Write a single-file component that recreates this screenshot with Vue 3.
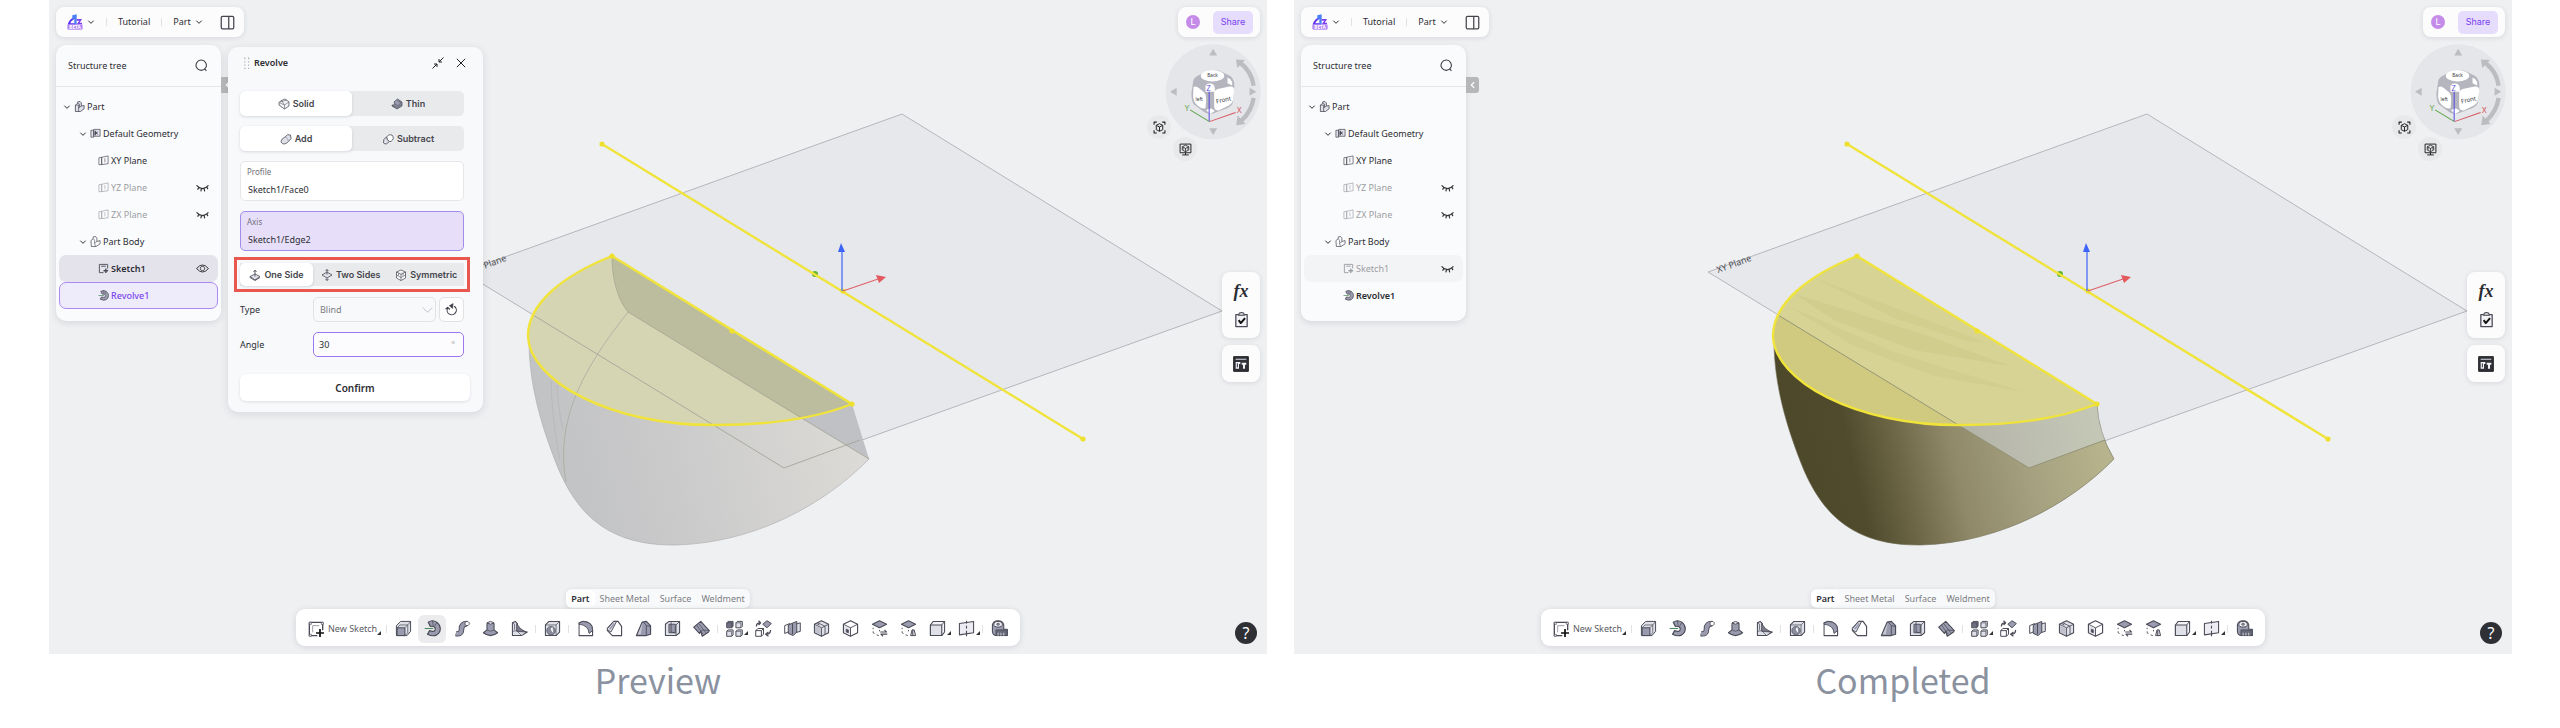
<template>
  <main class="compare">
    <figure v-for="view in views" :key="view.id" class="figure">
      <div class="screen">
        <svg class="scene" viewBox="0 0 1218 654" aria-hidden="true">
          <defs>
            <linearGradient :id="view.id + '-body'" gradientUnits="userSpaceOnUse" x1="490" y1="440" x2="790" y2="370">
              <stop v-for="stop in view.bodyStops" :key="stop[0]" :offset="stop[0]" :stop-color="stop[1]" />
            </linearGradient>
          </defs>
          <path d="M853 114L1173 311L735 468L414 272Z" fill="#e6e8ec" stroke="#b4b6bb" />
          <text class="plane-name" transform="translate(424 273) rotate(-20)">XY Plane</text>
          <path :d="bodyPath" :fill="`url(#${view.id}-body)`" :stroke="view.edge" stroke-width="0.6" />

          <template v-if="view.id === 'preview'">
            <path d="M803 404L820 459L753 419Z" fill="#bfc1c5" />
            <path :d="facePath" fill="#d6d5b3" />
            <path d="M563 256C563 280 569 300 579 312L753 419L803 404Z" fill="#bcbd9f" />
            <path d="M563 256C563 280 569 300 579 312L820 459" fill="none" stroke="#a6a795" stroke-width="0.8" />
            <path d="M579 312C540 362 505 415 517 482" fill="none" stroke="#a9a9a0" stroke-width="0.8" />
            <path d="M502 381C503 410 506 436 511 460M508 385C509 402 511 418 514 430" fill="none" stroke="#b5b6b8" stroke-width="0.8" />
            <path d="M484 315L735 468L811 440" fill="none" stroke="#a4a59a" stroke-width="0.9" />
          </template>
          <template v-else>
            <path d="M666 426L735 468L811 440Q804 424 803 404Q750 425 666 426Z" fill="#d2dadf" fill-opacity="0.5" />
            <path :d="facePath" fill="#cfca80" />
            <path d="M563 256L803 404Q750 425 666 426L484 315Q500 280 563 256Z" fill="#d6d395" />
            <path d="M520 278L612 312L690 342L672 341L600 318Z" fill="#cfcc8c" fill-opacity="0.7" />
            <path d="M500 294L540 306L640 338L716 366L620 350L540 320Z" fill="#cdca88" fill-opacity="0.6" />
            <path d="M494 306L600 352L730 392L640 376L560 346Z" fill="#cfcc8c" fill-opacity="0.6" />
            <path d="M484 315L735 468L811 440" fill="none" stroke="#8e8f73" stroke-width="0.9" />
          </template>

          <path :d="facePath" class="sketch-line" />
          <circle cx="766" cy="274" r="3" fill="#62b52e" />
          <path d="M553 144L1034 439" class="sketch-line" />
          <circle v-for="p in points" :key="p[0]" :cx="p[0]" :cy="p[1]" r="2.6" fill="#efe02f" />
          <path d="M793 291V250" stroke="#4a6df5" stroke-width="1.3" />
          <path d="M792 243L796 252H789Z" fill="#3d63f7" />
          <path d="M794 291L829 279" stroke="#e0626a" stroke-width="1.3" />
          <path d="M837 277L827 275L830 283Z" fill="#e2595e" />
        </svg>

        <header class="top">
          <nav class="bar menu">
            <button class="logo" aria-label="Home">
              <svg viewBox="0 0 48 48" width="16" height="16">
                <path d="M2 32C4 22 12 12 24 8V14C15 17 10 24 10 28H24V32Z" fill="#5a2cf0" />
                <path d="M16 4L29 1V32H22V12L16 20Z" fill="#4a7ff7" />
                <path d="M29 15H45L38 26H45V31H29L37 20H29Z" fill="#7b3df2" />
                <rect x="1" y="31" width="46" height="16" rx="4" fill="#b388f7" />
                <text x="24" y="44" text-anchor="middle" class="beta">BETA</text>
              </svg>
              <Icon name="chevron" :size="8" />
            </button>
            <i class="rule"></i>
            <a href="#" class="crumb">Tutorial</a>
            <i class="rule"></i>
            <button class="crumb">Part <Icon name="chevron" :size="8" /></button>
            <button class="panel-toggle" aria-label="Toggle panel"><Icon name="columns" :size="15" /></button>
          </nav>
          <div class="bar account">
            <span class="avatar">L</span>
            <button class="share">Share</button>
          </div>
        </header>

        <div class="middle">
          <aside class="tree">
            <div class="tree-head">
              <span>Structure tree</span>
              <button aria-label="Search"><Icon name="search" :size="13" /></button>
            </div>
            <ul>
              <li
                v-for="node in view.nodes"
                :key="node.name"
                :class="['node', 'level-' + node.level, node.state, { dim: node.hidden }]"
              >
                <Icon v-if="node.level < 3" name="chevron" :size="8" class="node-arrow" />
                <Icon :name="node.icon" :size="11" class="node-icon" />
                <span class="node-name">{{ node.name }}</span>
                <Icon v-if="node.hidden" name="closed" :size="13" class="eye" />
                <Icon v-else-if="node.state === 'hover'" name="eye" :size="13" class="eye" />
              </li>
            </ul>
            <button class="fold" aria-label="Collapse tree"><Icon name="back" :size="10" /></button>
          </aside>

          <form v-if="view.dialog" class="dialog" @submit.prevent>
            <div class="dialog-head">
              <Icon name="grip" :size="13" class="grip" />
              <h2>Revolve</h2>
              <button type="button" aria-label="Minimize"><Icon name="shrink" :size="12" /></button>
              <button type="button" aria-label="Close"><Icon name="close" :size="10" /></button>
            </div>
            <div class="fields">
              <div
                v-for="group in groups"
                :key="group.key"
                :class="['segment', group.key]"
              >
                <button
                  v-for="option in group.options"
                  :key="option.label"
                  type="button"
                  :class="{ active: chosen[group.key] === option.label }"
                  @click="chosen[group.key] = option.label"
                >
                  <Icon :name="option.icon" :size="12" />{{ option.label }}
                </button>
              </div>
              <label class="pick profile"><span>Profile</span><input v-model="profile" readonly /></label>
              <label class="pick axis"><span>Axis</span><input v-model="axis" readonly /></label>
              <div class="line type">
                <label for="revolve-type">Type</label>
                <div class="select">
                  <select id="revolve-type" disabled><option>Blind</option></select>
                  <Icon name="thinChevron" :size="11" class="select-arrow" />
                </div>
                <button type="button" class="flip" aria-label="Flip direction"><Icon name="rotate" :size="13" /></button>
              </div>
              <div class="line angle">
                <label for="revolve-angle">Angle</label>
                <div class="number">
                  <input id="revolve-angle" v-model="angle" />
                  <span>°</span>
                </div>
              </div>
            </div>
            <button class="confirm">Confirm</button>
          </form>

          <div class="gizmo">
            <svg viewBox="105 130 290 290" width="97" height="97" aria-hidden="true">
              <circle cx="249" cy="276" r="142" fill="#e5e6e9" />
              <path d="M249 147L261 167H237ZM249 405L261 385H237ZM120 276L140 264V288ZM378 276L358 264V288Z" fill="#bcbdc0" />
              <path d="M331 190Q364 216 370 258M370 294Q364 334 333 363" fill="none" stroke="#bcbdc0" stroke-width="13" />
              <path d="M317 179L344 181L321 205ZM318 376L346 372L322 347Z" fill="#bcbdc0" />
              <path d="M190 240Q194 231 210 224Q240 205 268 213L300 229Q314 240 312 262L308 307Q305 318 292 324L250 340Q236 345 222 336L192 314Q184 306 184 280Z" fill="#b4b5be" />
              <ellipse cx="247" cy="228" rx="35" ry="17" fill="#fff" />
              <path d="M190 262Q197 256 208 266L223 279Q229 286 228 304L226 325Q217 329 204 318Q190 309 189 290ZM252 278Q254 270 266 267L298 260Q312 258 312 272L308 302Q306 312 296 317L267 331Q253 334 252 320ZM232 252Q253 247 254 266V276H226V258ZM292 233Q302 236 306 247V257L292 250ZM228 331Q240 320 254 333L240 342Z" fill="#fff" />
              <text x="247" y="233" class="face">Back</text>
              <text x="207" y="302" class="face">left</text>
              <text x="280" y="306" class="face front" transform="rotate(-12 280 300)">Front</text>
              <path d="M238 365L180 330" stroke="#5aa345" stroke-width="3" />
              <path d="M238 365L316 338" stroke="#d8545f" stroke-width="3" />
              <path d="M237 363V276" stroke="#5548e0" stroke-width="3" />
              <text x="171" y="333" class="letter y">Y</text>
              <text x="327" y="340" class="letter x">X</text>
              <text x="235" y="275" class="letter z">Z</text>
            </svg>
            <button class="orb fit" aria-label="Fit view"><Icon name="fit" :size="13" /></button>
            <button class="orb display" aria-label="Display style"><Icon name="monitor" :size="13" /></button>
          </div>
        </div>

        <div class="side-tools">
          <div class="bar side-group">
            <button class="fx" aria-label="Variables"><i>fx</i></button>
            <button aria-label="Check"><Icon name="clipboard" :size="17" /></button>
          </div>
          <div class="bar side-group">
            <button aria-label="Library"><Icon name="library" :size="16" /></button>
          </div>
        </div>

        <footer class="bottom">
          <div class="dock">
            <div class="tabs">
              <button v-for="tab in tabs" :key="tab" :class="{ active: tab === 'Part' }">{{ tab }}</button>
            </div>
            <div class="toolbar">
              <button class="new-sketch more"><Icon name="newSketch" :size="16" />New Sketch</button>
              <template v-for="(group, g) in tools" :key="g">
                <i class="rule"></i>
                <button
                  v-for="tool in group"
                  :key="tool"
                  :aria-label="tool"
                  :class="['tool', { active: view.dialog && tool === 'revolve', more: withMenu.includes(tool) }]"
                >
                  <Icon :name="tool" :size="17" />
                </button>
              </template>
            </div>
          </div>
          <button class="help" aria-label="Help">?</button>
        </footer>
      </div>
      <figcaption>{{ view.caption }}</figcaption>
    </figure>
  </main>
</template>

<script setup>
import { h, reactive, ref } from 'vue'

const ink = '#4a4b57'
const mid = '#9a9baf'
const pale = '#dfe0e8'

// each shape: [path, fill, stroke, stroke width] on a 24 x 24 grid
const icons = {
  chevron: [['M4 8L12 16L20 8', 'none', 'currentColor', 3]],
  thinChevron: [['M2 8L12 18L22 8', 'none', 'currentColor', 2]],
  back: [['M15 5L8 12L15 19', 'none', '#fff', 3]],
  columns: [['M4 2H20Q22 2 22 4V20Q22 22 20 22H4Q2 22 2 20V4Q2 2 4 2ZM14 2V22', 'none', '#45464d', 2]],
  search: [['M21 22L18 18M11.500 2A9.500 9.500 0 1 1 11.400 2Z', 'none', '#3c3d44', 2]],
  close: [['M2 2L22 22M22 2L2 22', 'none', '#222', 2.4]],
  shrink: [['M23 1L14 10M14 4V10H20M1 23L10 14M4 14H10V20', 'none', '#222', 2]],
  grip: [['M8 1H10V4H8ZM8 8H10V10H8ZM8 14H10V16H8ZM8 20H10V22H8ZM15 1H17V4H15ZM15 8H17V10H15ZM15 14H17V16H15ZM15 20H17V22H15Z', '#aaabb0', 'none', 0]],
  rotate: [['M5 9A8.500 8.500 0 1 0 17 6', 'none', '#3b3c44', 2], ['M15 1L8 5L14 10Z', '#3b3c44', '#3b3c44', 1], ['M1 11L5 8L9 12', 'none', '#3b3c44', 2]],
  eye: [['M1 12Q12 -1 23 12Q12 25 1 12Z', 'none', '#333', 1.8], ['M12 8A4 4 0 1 1 11.900 8Z', 'none', '#333', 1.8]],
  closed: [['M1 8Q12 20 23 8M5 12L3 16M10 14L9 19M15 14L16 19M20 11L22 15', 'none', '#333', 2.2]],
  part: [['M3 9L8 5V2L13 1L16 4V11L22 10V17L14 23H3Z', pale, ink, 1.800], ['M3 9H10V23M10 15L16 11M8 5L12 7V14', 'none', ink, 1.5]],
  geometry: [['M2 5H8V20H2ZM8 3H22V18H8Z', pale, ink, 1.600], ['M12 6V16M9 11H17M10 8L16 14M16 8L10 14', 'none', ink, 2]],
  plane: [['M2 6L8 5V21H2ZM8 5L22 2V19L8 21Z', 'none', ink, 1.500], ['M15 7V16', 'none', ink, 1.300]],
  body: [['M2 10L7 6V2L12 1L15 5V12L22 10V17L13 23H3Z', 'none', ink, 1.600], ['M7 6L10 9V16L15 12M10 16L12 23', 'none', ink, 1.300]],
  sketch: [['M3 21V3H21V12', 'none', ink, 2], ['M3 21H12M7 7H17', 'none', ink, 2], ['M17 12V22M12 17H22', 'none', ink, 3]],
  newSketch: [['M2 2H22V14M2 2V22H14', 'none', ink, 2], ['M7 17V7H17', 'none', '#a0a1aa', 1.500], ['M2 2H5V5H2ZM20 2H23V5H20ZM2 20H5V23H2Z', '#fff', ink, 1], ['M18 12V24M12 18H24', 'none', '#111', 2.6]],
  solid: [['M5 6L14 2L22 8V16L13 22L2 14V9Z', '#f1f2f5', ink, 1.500], ['M2 9L13 14L22 8M13 14V22M7 5L13 14M4 8L18 4', 'none', ink, 1]],
  thin: [['M6 8L13 2L22 8V16L12 22L2 16V14L8 14Z', mid, ink, 1.500], ['M2 15L13 19L22 12M8 12L14 16L20 9L13 5', 'none', ink, 1.300]],
  add: [['M10 8Q15 1 21 4Q25 12 17 17L12 21Q4 24 2 17Q3 11 10 8Z', pale, ink, 1.600], ['M10 8Q16 9 17 17', 'none', mid, 1.500]],
  subtract: [['M9 8Q14 1 20 4Q26 11 18 17Q11 18 9 8Z', '#fff', ink, 1.600], ['M9 8Q1 12 3 20Q9 25 14 17Q10 14 9 8Z', pale, ink, 1.600]],
  oneSide: [['M2 15L12 10L22 15L12 22Z', pale, ink, 1.600], ['M12 15V3M9 6L12 2L15 6M2 15V17L12 23L22 17', 'none', ink, 1.700]],
  twoSides: [['M2 12L12 6L22 12L12 18Z', pale, ink, 1.600], ['M12 11V1M9 4L12 1L15 4M12 18V23M9 20L12 23L15 20', 'none', ink, 1.700]],
  symmetric: [['M3 6L12 2L21 6L12 11ZM3 6V18L12 23L21 18V6', '#fff', ink, 1.500], ['M12 11V23M3 12L12 17L21 12M7 9V13M16 9V13', 'none', ink, 1.300]],
  fit: [['M2 7V2H7M17 2H22V7M22 17V22H17M7 22H2V17', 'none', '#222', 2], ['M12 5L18 8V16L12 19L6 16V8ZM6 8L12 11L18 8M12 11V19', 'none', '#222', 1.800]],
  monitor: [['M2 2H22V18H2ZM12 18V22M6 22H18', 'none', '#222', 1.800], ['M12 4L18 7V13L12 16L6 13V7ZM6 7L12 10L18 7M12 10V16M8 10V12M16 10V12', 'none', '#222', 1.500]],
  clipboard: [['M4 5H20V22H4Z', '#f3f3f6', ink, 1.800], ['M8 6Q8 2 12 2T16 6Z', '#ddd', ink, 1.500], ['M8 13L11 17L17 10', 'none', '#111', 2.800]],
  library: [['M1 1H23V23H1Z', '#303139', '#222', 1.500], ['M4 4H20V6H4Z', '#aeb0b8', 'none', 0], ['M4 9H11V12H9V19H4ZM13 10H20V13H18V19H15V13H13Z', '#f3f3f6', 'none', 0], ['M6.500 11V17', 'none', '#303139', 1.500]],
  extrude: [['M2 8L8 2H22V16L17 22H2Z', pale, ink, 1.400], ['M3 11H14V22H3Z', mid, ink, 1.400], ['M14 11L18 7H7L3 11M18 7V18L14 22M22 2L18 7', 'none', ink, 1]],
  revolve: [['M6 3Q12 -1 18 3Q23 7 23 12Q23 18 18 21Q12 24 5 20L8 15Q16 18 16 12Q15 8 9 9Z', mid, ink, 1.600], ['M1 12H13', 'none', '#4c8b63', 1.600], ['M12 1L13 8M18 3L15 9M5 20L8 15', 'none', ink, 1]],
  sweep: [['M4 19Q12 21 12 13T20 5', 'none', ink, 8], ['M4 19Q12 21 12 13T20 5', 'none', mid, 5.500], ['M20 2A3 3 0 1 1 19.900 2Z', '#fff', ink, 1.300]],
  loft: [['M2 18L7 14V5H17V14L22 18Q12 26 2 18Z', mid, ink, 1.500], ['M7 4Q12 0 17 4Q12 8 7 4Z', pale, ink, 1.300], ['M7 14Q12 18 17 14', 'none', ink, 1]],
  rib: [['M2 4L6 2L9 5V14L23 17L15 22H2Z', pale, ink, 1.500], ['M8 5Q12 13 21 17L8 16Z', '#777889', ink, 1.200], ['M2 16L8 15L15 22M2 4L5 6V14', 'none', ink, 1]],
  hole: [['M2 7L7 2H22V17L17 22H2Z', pale, ink, 1.500], ['M17 22V7H2M17 7L22 2', 'none', ink, 1], ['M10 9A6 6 0 1 1 9.900 9Z', '#8a8b9c', ink, 1], ['M12 10Q7 13 13 18', '#fff', 'none', 0]],
  fillet: [['M3 22V4L8 2Q22 3 22 14V22Z', '#fff', ink, 1.600], ['M3 4L9 2Q22 3 22 14V15L17 19Q17 8 3 6Z', mid, ink, 1.300], ['M4 7Q15 8 16 21H4Z', '#fff', 'none', 0]],
  chamfer: [['M11 2H17L22 9V22H9L2 15V12Z', '#fff', ink, 1.600], ['M11 2H15L7 17L2 14V12Z', pale, ink, 1.300], ['M12 5L5 13', 'none', mid, 2.500]],
  draft: [['M10 3L16 2L22 8V20L16 22H2Z', mid, ink, 1.600], ['M12 3L16 8V22M16 8L22 9', 'none', ink, 1.200], ['M11 4L4 20H8Z', '#c9cad5', 'none', 0]],
  shell: [['M2 6L7 2H22V18L17 22H2Z', pale, ink, 1.500], ['M7 6H16V18H7Z', mid, ink, 1.300], ['M10 3V17L16 18M17 22V7L22 2', 'none', ink, 1.200]],
  thicken: [['M1 10L11 2L23 15L22 17L13 23L11 16L9 19Z', mid, ink, 1.500], ['M5 7L14 20M8 5L18 18M9 19L13 14L23 15', 'none', ink, 1]],
  pattern: [['M1 4L3 2H10V9L8 11H1Z', '#6d6e80', ink, 1.300], ['M14 4L16 2H23V9L21 11H14ZM1 16L3 14H10V21L8 23H1ZM14 16L16 14H23V21L21 23H14Z', pale, ink, 1.400], ['M8 11V4H1M21 11V4H14M8 23V16H1M21 23V16H14', 'none', ink, 1]],
  transform: [['M11 6L17 1L23 5L17 11Z', mid, ink, 1.400], ['M1 15L4 12H12V20L9 23H1ZM9 23V15H1M9 15L12 12', '#fff', ink, 1.400], ['M2 9Q2 4 7 4M5 1L8 4L5 7M22 14Q22 20 16 20M19 17L15 20L19 23', 'none', ink, 1.800]],
  split: [['M1 8L8 5V16L1 19Z', '#fff', ink, 1.400], ['M16 6L23 4V16L16 18Z', pale, ink, 1.400], ['M6 7L18 2V17L13 22L6 19Z', mid, ink, 1.400], ['M12 5V20', 'none', ink, 1.400]],
  join: [['M2 6L12 1L22 6V18L12 23L2 18Z', pale, ink, 1.500], ['M2 6L12 11L22 6M12 11V23M7 4L17 9V20M5 5L9 7', 'none', ink, 1.200], ['M3 8L11 12V21L3 17Z', '#c0c1cd', 'none', 0]],
  intersect: [['M2 6L12 1L22 6V18L12 23L2 18Z', '#fff', ink, 1.600], ['M2 6L12 11L22 6M12 11V23', 'none', ink, 1.300], ['M3 8L11 12V21L3 17Z', pale, 'none', 0], ['M6 13L9 14V18L6 17Z', '#50515e', ink, 1]],
  moveFace: [['M2 6L12 1L22 6L12 11Z', mid, ink, 1.500], ['M3 11V13M3 16V18L5 19M8 21L11 22M12 14V16', 'none', ink, 1.300], ['M13 17H22L19 14M23 20H14L17 23', 'none', ink, 1.600]],
  draftFace: [['M2 6L12 1L22 6L12 11Z', mid, ink, 1.500], ['M3 11V13M3 16V18L5 19M8 21L11 22M12 14V16', 'none', ink, 1.300], ['M15 22L17 14H20L22 22ZM18 14V22', pale, ink, 1.400]],
  block: [['M2 7L6 2H22V17L18 22H2Z', '#f3f3f7', ink, 1.500], ['M2 7H18V22H2Z', pale, ink, 1.500], ['M18 7L22 2', 'none', ink, 1.300]],
  datum: [['M2 5L22 2V18L2 21Z', '#ececf2', ink, 1.500], ['M12 1V5M12 8V12M12 15V23', 'none', ink, 1.600]],
  measure: [['M2 7Q3 1 10 1T18 7V13H23V22H8Q2 22 2 16Z', mid, ink, 1.500], ['M10 2Q16 2 16 6T10 10T4 6T10 2Z', '#f0f0f4', ink, 1.400], ['M10 4.500Q12 4.500 12 6T10 7.500T8 6T10 4.500Z', mid, ink, 1], ['M7 14H23V22H7Z', '#666777', ink, 1.200], ['M10 22V18M14 22V18M18 22V18', 'none', '#fff', 1]]
}

const Icon = (props) =>
  h(
    'svg',
    { viewBox: '0 0 24 24', width: props.size, height: props.size, 'aria-hidden': 'true' },
    icons[props.name].map(([d, fill, stroke, width]) =>
      h('path', { d, fill, stroke, 'stroke-width': width, 'stroke-linejoin': 'round' })
    )
  )
Icon.props = ['name', 'size']

const facePath = 'M563 256C515 275 479 303 479 336C480 380 560 426 668 425C720 425 765 419 803 404Z'
const bodyPath =
  'M480 345C481 385 491 422 507 463C528 517 562 546 627 545C705 543 775 505 820 459Q804 432 803 404C700 360 600 300 480 345Z'
const points = [[553, 144], [1034, 439], [563, 256], [803, 404], [683, 331], [794, 291]]

const tree = (last) => [
  { name: 'Part', level: 1, icon: 'part' },
  { name: 'Default Geometry', level: 2, icon: 'geometry' },
  { name: 'XY Plane', level: 3, icon: 'plane' },
  { name: 'YZ Plane', level: 3, icon: 'plane', hidden: true },
  { name: 'ZX Plane', level: 3, icon: 'plane', hidden: true },
  { name: 'Part Body', level: 2, icon: 'body' },
  ...last
]

const views = [
  {
    id: 'preview',
    caption: 'Preview',
    dialog: true,
    edge: '#a9aaac',
    bodyStops: [[0, '#c1c2c4'], [0.35, '#c9c9ca'], [1, '#dbdad6']],
    nodes: tree([
      { name: 'Sketch1', level: 3, icon: 'sketch', state: 'hover' },
      { name: 'Revolve1', level: 3, icon: 'revolve', state: 'editing' }
    ])
  },
  {
    id: 'completed',
    caption: 'Completed',
    dialog: false,
    edge: '#6d6b54',
    bodyStops: [[0, '#4c4829'], [0.2, '#504b2d'], [0.36, '#6e6848'], [0.52, '#8f8969'], [0.75, '#a5a07f'], [1, '#b7b38c']],
    nodes: tree([
      { name: 'Sketch1', level: 3, icon: 'sketch', state: 'muted', hidden: true },
      { name: 'Revolve1', level: 3, icon: 'revolve', state: 'strong' }
    ])
  }
]

const groups = [
  { key: 'shape', options: [{ label: 'Solid', icon: 'solid' }, { label: 'Thin', icon: 'thin' }] },
  { key: 'mode', options: [{ label: 'Add', icon: 'add' }, { label: 'Subtract', icon: 'subtract' }] },
  {
    key: 'side',
    options: [
      { label: 'One Side', icon: 'oneSide' },
      { label: 'Two Sides', icon: 'twoSides' },
      { label: 'Symmetric', icon: 'symmetric' }
    ]
  }
]
const chosen = reactive({ shape: 'Solid', mode: 'Add', side: 'One Side' })
const profile = ref('Sketch1/Face0')
const axis = ref('Sketch1/Edge2')
const angle = ref('30')

const tabs = ['Part', 'Sheet Metal', 'Surface', 'Weldment']
const tools = [
  ['extrude', 'revolve', 'sweep', 'loft', 'rib'],
  ['hole'],
  ['fillet', 'chamfer', 'draft', 'shell', 'thicken'],
  ['pattern', 'transform', 'split', 'join', 'intersect', 'moveFace', 'draftFace', 'block', 'datum'],
  ['measure']
]
const withMenu = ['pattern', 'block', 'datum']
</script>

<style>
body {
  background: #fff;
}
</style>

<style scoped>
.compare {
  display: grid;
  grid-template-columns: 1fr 1fr;
  gap: 27px;
  padding: 0 48px 0 49px;
  font-family: "Noto Sans", "Open Sans", sans-serif;
  font-size: 9px;
  line-height: 12px;
  color: #2c2d33;
}

.figure {
  margin: 0;
}

figcaption {
  padding-top: 4px;
  text-align: center;
  font-family: "Noto Sans CJK SC", sans-serif;
  font-size: 34px;
  line-height: 44px;
  color: #8a919f;
}

button,
input,
select {
  margin: 0;
  padding: 0;
  border: 0;
  background: none;
  color: inherit;
  font: inherit;
}

button {
  display: flex;
  align-items: center;
  justify-content: center;
  cursor: pointer;
}

.screen {
  position: relative;
  box-sizing: border-box;
  display: flex;
  flex-direction: column;
  aspect-ratio: 1218 / 654;
  padding: 7px 7px 8px;
  overflow: hidden;
  background: #eff0f2;
}

.scene {
  position: absolute;
  inset: 0;
  width: 100%;
  height: 100%;
}

.plane-name {
  font-size: 9px;
  fill: #4b4c52;
}

.sketch-line {
  fill: none;
  stroke: #f0e33a;
  stroke-width: 2.4;
  stroke-linejoin: round;
}

.bar {
  border-radius: 8px;
  background: #fcfcfd;
  box-shadow: 0 1px 5px rgba(40, 45, 60, 0.12);
}

.rule {
  flex: none;
  width: 1px;
  height: 8px;
  background: #e1e2e6;
}

/* top row */
.top {
  position: relative;
  display: flex;
  justify-content: space-between;
  height: 30px;
}

.menu {
  display: flex;
  align-items: center;
  gap: 11px;
  padding: 0 9px 0 11px;
}

.logo {
  gap: 4px;
}

.beta {
  font-size: 14px;
  font-weight: 700;
  fill: #fff;
}

.crumb {
  gap: 4px;
  color: inherit;
  text-decoration: none;
}

.panel-toggle {
  margin-left: 6px;
}

.account {
  display: flex;
  align-items: center;
  gap: 13px;
  padding: 0 7px 0 8px;
}

.avatar {
  width: 14px;
  border-radius: 50%;
  background: #c58be8;
  color: #fff;
  text-align: center;
  line-height: 14px;
  font-family: Inter, sans-serif;
}

.share {
  width: 40px;
  height: 23px;
  border-radius: 5px;
  background: #e6dcfc;
  color: #7a3ff2;
  font-family: Inter, sans-serif;
}

/* tree */
.middle {
  position: relative;
  flex: 1;
  display: flex;
  align-items: flex-start;
  gap: 7px;
  padding-top: 6px;
}

.tree {
  position: relative;
  width: 165px;
  margin-top: 2px;
  padding-bottom: 12px;
  border-radius: 10px;
  background: #fafbfc;
  box-shadow: 0 2px 6px rgba(40, 45, 60, 0.12);
}

.tree-head {
  display: flex;
  align-items: center;
  justify-content: space-between;
  height: 41px;
  padding: 0 13px 0 12px;
  border-bottom: 1px solid #e6e7ea;
}

.tree ul {
  margin: 0;
  padding: 6px 3px 0;
  list-style: none;
}

.node {
  box-sizing: border-box;
  display: flex;
  align-items: center;
  height: 27px;
  padding: 0 9px 0 4px;
  border-radius: 7px;
}

.level-2 {
  padding-left: 20px;
}

.level-3 {
  padding-left: 39px;
}

.node-arrow {
  margin-right: 3px;
}

.node-name {
  flex: 1;
  margin-left: 2px;
}

.dim .node-name {
  color: #9d9ea3;
}

.dim .node-icon {
  opacity: 0.5;
}

.hover {
  background: #e4e3ec;
  font-weight: 600;
}

.editing {
  padding-left: 38px;
  padding-right: 8px;
  border: 1px solid #a98bf3;
  background: #eeebfa;
  color: #7c46f0;
  font-weight: 500;
}

.muted {
  background: #f3f4f5;
}

.strong {
  font-weight: 600;
}

.fold {
  position: absolute;
  top: 32px;
  left: 100%;
  width: 13px;
  height: 16px;
  border-radius: 0 3px 3px 0;
  background: #b6b7b9;
}

/* revolve dialog */
.dialog {
  position: relative;
  z-index: 1;
  box-sizing: border-box;
  width: 255px;
  margin-top: 4px;
  padding: 0 13px 11px 12px;
  border-radius: 10px;
  background: #f7f9fb;
  box-shadow: 0 2px 8px rgba(40, 45, 60, 0.12);
}

.dialog-head {
  display: flex;
  align-items: center;
  gap: 12px;
  height: 32px;
  padding-right: 4px;
}

.dialog-head h2 {
  flex: 1;
  margin: 0 0 0 -11px;
  font-size: 9px;
  font-weight: 600;
}

.fields {
  display: flex;
  flex-direction: column;
  gap: 10px;
  padding: 12px 6px 17px 0;
}

.shape {
  order: 1;
}

.mode {
  order: 2;
}

.profile {
  order: 3;
}

.axis {
  order: 4;
}

.side {
  order: 5;
}

.line {
  order: 6;
}

.segment {
  display: grid;
  grid-template-columns: 1fr 1fr;
  height: 25px;
  border-radius: 5px;
  background: #e9eaec;
  font-family: Inter, sans-serif;
  font-weight: 600;
  color: #45464c;
}

.segment button {
  gap: 3px;
  border-radius: 5px;
}

.segment .active {
  background: #fff;
  box-shadow: 0 1px 3px rgba(40, 45, 60, 0.16);
}

.segment.side {
  grid-template-columns: 73px 1fr 1fr;
  height: 23px;
  margin: 2px 0 1px;
  border-radius: 0;
  outline: 3px solid #e9584f;
  outline-offset: 3px;
}

.pick {
  box-sizing: border-box;
  display: flex;
  flex-direction: column;
  justify-content: space-between;
  height: 40px;
  padding: 4px 6px;
  border: 1px solid #e6e7eb;
  border-radius: 5px;
  background: #fff;
}

.pick span {
  font-size: 8px;
  line-height: 12px;
  color: #6f7077;
}

.pick input {
  padding-left: 1px;
  line-height: 12px;
}

.pick.axis {
  border-color: #a28bea;
  background: #e7dffa;
}

.line {
  display: grid;
  grid-template-columns: 73px 1fr auto;
  align-items: center;
  height: 25px;
}

.select {
  position: relative;
  height: 25px;
}

.select select {
  box-sizing: border-box;
  width: 100%;
  height: 100%;
  padding: 0 6px;
  border: 1px solid #e0e2e6;
  border-radius: 5px;
  appearance: none;
  color: #7c7d84;
  opacity: 1;
}

.select-arrow {
  position: absolute;
  top: 7px;
  right: 3px;
  color: #b9bac0;
}

.flip {
  box-sizing: border-box;
  width: 25px;
  height: 25px;
  margin-left: 3px;
  border: 1px solid #e0e2e6;
  border-radius: 5px;
  background: #fdfdfe;
}

.number {
  grid-column: 2 / 4;
  box-sizing: border-box;
  display: flex;
  align-items: center;
  height: 25px;
  padding: 0 8px 0 5px;
  border: 1px solid #9c78f0;
  border-radius: 5px;
  background: #fcfcfe;
}

.number input {
  flex: 1;
  min-width: 0;
  outline: none;
}

.number span {
  color: #9d9ea3;
}

.confirm {
  width: 100%;
  height: 27px;
  border-radius: 6px;
  background: #fff;
  box-shadow: 0 1px 3px rgba(40, 45, 60, 0.12);
  font-size: 10px;
  font-weight: 600;
}

/* view cube */
.gizmo {
  position: relative;
  width: 97px;
  height: 97px;
  margin: 0 -2px 0 auto;
}

.face {
  font-size: 14px;
  text-anchor: middle;
  fill: #33343a;
}

.front {
  font-size: 18px;
}

.letter {
  font-family: Inter, sans-serif;
  font-size: 22px;
  text-anchor: middle;
}

.letter.x {
  fill: #d8545f;
}

.letter.y {
  fill: #5aa345;
}

.letter.z {
  fill: #5548e0;
}

.orb {
  position: absolute;
  width: 24px;
  height: 24px;
  border-radius: 50%;
  background: #e8e9eb;
}

.orb.fit {
  top: 72px;
  left: -18px;
}

.orb.display {
  top: 94px;
  left: 8px;
}

.side-tools {
  position: absolute;
  top: 50%;
  right: 7px;
  display: flex;
  flex-direction: column;
  gap: 7px;
  transform: translateY(-50%);
}

.side-group {
  display: flex;
  flex-direction: column;
  width: 38px;
  padding: 4px 0;
}

.side-group button {
  width: 38px;
  height: 29px;
}

.side-group .fx {
  font-family: "Liberation Serif", serif;
  font-size: 18px;
  font-weight: 700;
}

/* bottom dock */
.bottom {
  position: relative;
  display: grid;
  grid-template-columns: 1fr auto 1fr;
  align-items: end;
}

.dock {
  grid-column: 2;
  display: flex;
  flex-direction: column;
  align-items: center;
}

.tabs {
  display: flex;
  padding: 1px 0;
  border-radius: 6px;
  background: #f8f9fa;
  box-shadow: 0 1px 5px rgba(40, 45, 60, 0.12);
}

.tabs button {
  height: 17px;
  padding: 0 5px;
  border-radius: 5px;
  color: #7d7e84;
}

.tabs .active {
  background: #fff;
  color: #2c2d33;
  font-weight: 600;
}

.toolbar {
  position: relative;
  box-sizing: border-box;
  display: flex;
  align-items: center;
  gap: 1px;
  height: 37px;
  margin-top: 1px;
  padding: 2px 7px 0 12px;
  border-radius: 9px;
  background: #fff;
  box-shadow: 0 1px 6px rgba(40, 45, 60, 0.14);
}

.toolbar .rule {
  margin: 0 1px;
}

.new-sketch {
  justify-content: flex-start;
  gap: 4px;
  width: 76px;
  height: 28px;
  color: #5b5c63;
}

.tool {
  width: 28px;
  height: 28px;
  border-radius: 6px;
}

.tool.active {
  background: #ececee;
}

.more {
  position: relative;
}

.more::after {
  content: "";
  position: absolute;
  right: 0;
  bottom: 8px;
  border: 2px solid #333;
  border-top-color: transparent;
  border-left-color: transparent;
}

.new-sketch.more::after {
  right: 3px;
}

.help {
  grid-column: 3;
  justify-self: end;
  width: 22px;
  height: 22px;
  margin: 0 3px 2px 0;
  border-radius: 50%;
  background: #2e3036;
  color: #fff;
  font-size: 16px;
}
</style>
